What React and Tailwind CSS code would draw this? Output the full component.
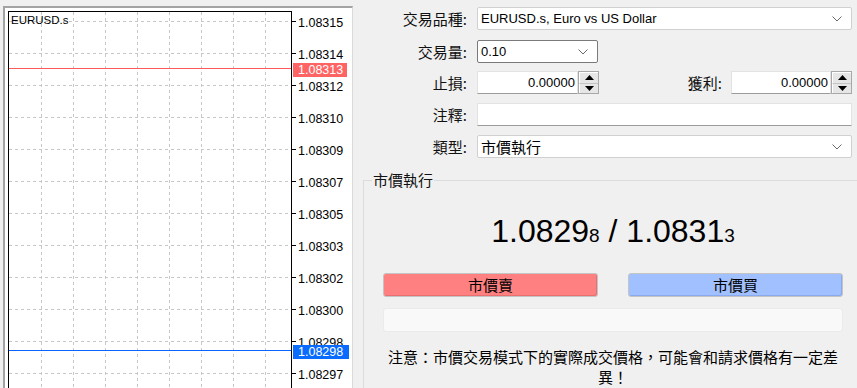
import React from 'react';

const prices = ['1.08315', '1.08314', '1.08312', '1.08310', '1.08309', '1.08307', '1.08305', '1.08303', '1.08302', '1.08300', '1.08298', '1.08297'];
const gridY = prices.map((_, i) => 13 + i * 32);
const gridX = [36, 68, 100, 132, 164, 196, 228, 260];

const latin = { fontFamily: '"Liberation Sans", "Noto Sans CJK TC", sans-serif' };

const Chevron = () => (
  <svg width="10" height="6" viewBox="0 0 10 6" className="shrink-0">
    <path d="M0.5 0.5 L5 5 L9.5 0.5" fill="none" stroke="#6a6a6a" strokeWidth="1" />
  </svg>
);

const Select = ({ value, className = '', border = 'border-[#d0d0d0]' }) => (
  <div className={`h-[23px] flex items-center justify-between bg-white border ${border} rounded-[2px] pl-[3px] pr-[9px] ${className}`}>
    <span className="text-[13px] text-black" style={latin}>{value}</span>
    <Chevron />
  </div>
);

const Spinner = () => (
  <div className="w-[21px] h-[23px] border border-[#a8a8a8] bg-[#e6e6e6] flex flex-col">
    <div className="flex-1 flex items-center justify-center border-b border-[#c4c4c4] border-l border-l-white border-t border-t-white">
      <svg width="9" height="5" viewBox="0 0 9 5"><path d="M4.5 0 L9 5 L0 5 Z" fill="#000" /></svg>
    </div>
    <div className="flex-1 flex items-center justify-center border-l border-l-white">
      <svg width="9" height="5" viewBox="0 0 9 5"><path d="M0 0 L9 0 L4.5 5 Z" fill="#000" /></svg>
    </div>
  </div>
);

const NumberField = ({ width }) => (
  <div className="flex">
    <div className={`${width} h-[23px] bg-white border border-[#e3e3e3] border-b-[#9c9c9c] flex items-center justify-end pr-[2px]`}>
      <span className="text-[13px] text-black" style={latin}>0.00000</span>
    </div>
    <Spinner />
  </div>
);

const Label = ({ children, className = 'w-[107px]' }) => (
  <div className={`${className} text-right text-[15px] leading-[20px] text-[#111] shrink-0`}>{children}</div>
);

const Chart = () => (
  <div className="ml-[3px] mt-[6px] w-[350px] h-[382px] border-l-2 border-t-2 border-[#a3a3a3] border-r border-r-[#dadada] bg-white">
    <div className="relative w-[347px] h-[380px]">
      <svg width="347" height="380" className="absolute left-0 top-0">
        {gridX.map((x) => (
          <line key={'v' + x} x1={x + 0.5} y1="4" x2={x + 0.5} y2="380" stroke="#c8c8c8" strokeDasharray="3 3" />
        ))}
        {gridY.map((y) => (
          <line key={'h' + y} x1="4" y1={y + 0.5} x2="286" y2={y + 0.5} stroke="#c8c8c8" strokeDasharray="3 3" />
        ))}
        {gridY.map((y) => (
          <line key={'t' + y} x1="287" y1={y + 0.5} x2="291" y2={y + 0.5} stroke="#000" />
        ))}
        <line x1="3.5" y1="3" x2="3.5" y2="380" stroke="#000" />
        <line x1="3" y1="3.5" x2="287" y2="3.5" stroke="#000" />
        <line x1="286.5" y1="3" x2="286.5" y2="380" stroke="#000" />
        <line x1="4" y1="60.5" x2="286" y2="60.5" stroke="#ff5a5a" />
        <line x1="4" y1="342.5" x2="286" y2="342.5" stroke="#0a64ff" />
      </svg>
      <div className="absolute left-[6px] top-[5px] text-[11.5px] leading-[14px] text-black" style={latin}>EURUSD.s</div>
      {prices.map((p, i) => (
        <div key={p} className="absolute left-[293px] h-[14px] text-[12.5px] leading-[14px] text-black" style={{ ...latin, top: gridY[i] - 5 }}>
          {p}
        </div>
      ))}
      <div className="absolute left-[288px] top-[55px] w-[54px] h-[14px] bg-[#ff6464] pl-[5px] text-[12.5px] leading-[14px] text-white" style={latin}>1.08313</div>
      <div className="absolute left-[288px] top-[337px] w-[56px] h-[14px] bg-[#0a6cff] pl-[5px] text-[12.5px] leading-[14px] text-white" style={latin}>1.08298</div>
    </div>
  </div>
);

export default function App() {
  return (
    <div
      className="w-[857px] h-[388px] bg-[#f0f0f0] flex overflow-hidden"
      style={{ fontFamily: '"Noto Sans CJK TC", "Liberation Sans", sans-serif' }}
    >
      <div className="w-[360px] shrink-0">
        <Chart />
      </div>

      <div className="w-[497px] shrink-0 flex flex-col pt-[7px]">
        <div className="flex items-center">
          <Label>交易品種:</Label>
          <Select value="EURUSD.s, Euro vs US Dollar" className="ml-[10px] w-[375px]" />
        </div>
        <div className="flex items-center mt-[10px]">
          <Label>交易量:</Label>
          <Select value="0.10" className="ml-[10px] w-[121px]" border="border-[#7a7a7a]" />
        </div>
        <div className="flex items-center mt-[8px]">
          <Label>止損:</Label>
          <div className="ml-[10px]">
            <NumberField width="w-[101px]" />
          </div>
          <Label className="w-[123px]">獲利:</Label>
          <div className="ml-[9px]">
            <NumberField width="w-[100px]" />
          </div>
        </div>
        <div className="flex items-center mt-[9px]">
          <Label>注釋:</Label>
          <div className="ml-[10px] w-[375px] h-[23px] bg-white border border-[#e3e3e3] border-b-[#9c9c9c]" />
        </div>
        <div className="flex items-center mt-[9px]">
          <Label>類型:</Label>
          <div className="ml-[10px] w-[375px] h-[23px] flex items-center justify-between bg-white border border-[#d0d0d0] rounded-[2px] pl-[3px] pr-[9px]">
            <span className="text-[15px] leading-[20px] text-black">市價執行</span>
            <Chevron />
          </div>
        </div>

        <fieldset className="mt-[12px] ml-[3px] w-[500px] flex-1 border-t border-l border-[#dcdcdc] border-r-0 border-b-0 min-w-0">
          <legend className="ml-[8px] px-[1px] text-[15px] leading-[20px] text-[#111]">市價執行</legend>
          <div className="ml-[19px] w-[460px] flex flex-col items-center">
            <div className="mt-[23px] h-[36px] leading-[36px] text-black whitespace-nowrap" style={latin}>
              <span className="text-[32px]">1.0829</span>
              <span className="text-[19px]">8</span>
              <span className="text-[32px]"> / 1.0831</span>
              <span className="text-[19px]">3</span>
            </div>
            <div className="mt-[24px] w-full flex justify-between">
              <button className="w-[215px] h-[24px] rounded-[3px] border border-[#c4c4c4] bg-[#ff8080] shadow-[inset_-1px_-1px_0_#e87070] text-[15px] leading-[20px] text-black">
                市價賣
              </button>
              <button className="w-[215px] h-[24px] rounded-[3px] border border-[#c4c4c4] bg-[#a0c0ff] shadow-[inset_-1px_-1px_0_#8aaaf0] text-[15px] leading-[20px] text-black">
                市價買
              </button>
            </div>
            <div className="mt-[11px] w-full h-[24px] rounded-[3px] bg-[#f9f9f9] border border-[#ebebeb]" />
            <div className="mt-[15px] w-full text-center text-[15px] leading-[20px] text-black">
              注意：市價交易模式下的實際成交價格，可能會和請求價格有一定差異！
            </div>
          </div>
        </fieldset>
      </div>
    </div>
  );
}
